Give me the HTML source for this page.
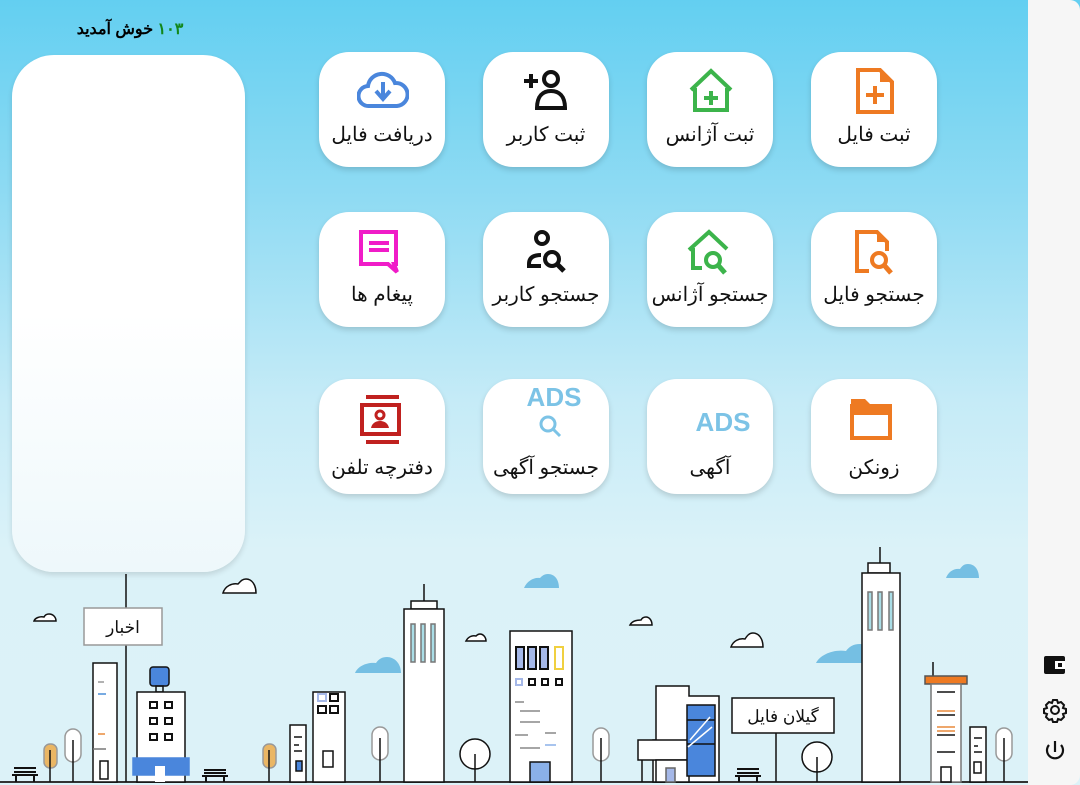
<!DOCTYPE html>
<html><head><meta charset="utf-8"><style>
body{margin:0;width:1080px;height:785px;overflow:hidden;font-family:"Liberation Sans","Noto Sans CJK SC",sans-serif;position:relative;
background:linear-gradient(180deg,#63cff1 0px,#90dbf3 200px,#c5ebf7 400px,#dbf2f8 550px,#dcf2f8 785px);}
.side{position:absolute;left:1028px;top:0;width:52px;height:785px;background:#f6f6f6;border-radius:0 10px 10px 0;}
.panel{position:absolute;left:12px;top:55px;width:233px;height:517px;border-radius:42px;background:linear-gradient(180deg,#fff 0%,#fff 50%,#eef8fb 100%);box-shadow:0 3px 6px rgba(0,0,0,.12);}
.welcome{position:absolute;left:60px;top:19px;width:140px;text-align:center;font-weight:bold;font-size:16px;direction:rtl;}
.card{position:absolute;width:126px;height:115px;background:#fff;border-radius:30px;box-shadow:0 3px 6px rgba(0,0,0,.15);}
.card svg{position:absolute;left:38px;top:16px;}
.card .t{position:absolute;left:0;right:0;top:70px;text-align:center;font-size:20px;direction:rtl;color:#111;}
</style></head><body>
<svg width="1080" height="785" style="position:absolute;left:0;top:0" fill="none" stroke="#111" stroke-width="1.5">
 <path d="M223 593h33c0-8-4-14-10-14-4 0-6 3-8 5-6-1-13 2-15 9z" fill="#fff"/>
 <path d="M34 621h22c0-4-3-7-7-7-2 0-4 1-5 3-4-1-9 1-10 4z" fill="#fff"/>
 <path d="M466 641h20c0-4-3-7-6-7-2 0-3 1-4 2-4-1-8 1-10 5z" fill="#fff"/>
 <path d="M630 625h22c0-5-3-8-6-8-2 0-4 1-5 3-4 0-9 1-11 5z" fill="#fff"/>
 <path d="M731 647h32c0-8-4-14-10-14-4 0-6 3-8 6-6-1-12 2-14 8z" fill="#fff"/>
 <path d="M355 673h46c0-10-7-16-14-16-6 0-9 3-11 6-9-1-18 3-21 10z" fill="#75bfe3" stroke="none"/>
 <path d="M524 588h35c0-8-4-14-11-14-4 0-6 2-8 4-6-1-13 3-16 10z" fill="#75bfe3" stroke="none"/>
 <path d="M816 663h62c0-11-8-19-18-19-7 0-11 3-14 7-13-2-26 4-30 12z" fill="#75bfe3" stroke="none"/>
 <path d="M946 578h33c0-8-4-14-11-14-4 0-6 2-8 5-6-1-12 3-14 9z" fill="#75bfe3" stroke="none"/>
 <line x1="0" y1="782" x2="1028" y2="782" stroke="#333" stroke-width="2"/>
 <line x1="126" y1="574" x2="126" y2="782"/>
 <rect x="84" y="608" width="78" height="37" fill="#fff" stroke="#999"/>
 <text x="123" y="633" font-size="17" fill="#111" stroke="none" text-anchor="middle" font-family="Liberation Sans,sans-serif">اخبار</text>
 <rect x="93" y="663" width="24" height="119" fill="#fff"/>
 <line x1="98" y1="682" x2="104" y2="682" stroke="#999"/><line x1="98" y1="694" x2="106" y2="694" stroke="#4a8fd8"/><line x1="98" y1="734" x2="105" y2="734" stroke="#e88a3c"/><line x1="93" y1="749" x2="106" y2="749" stroke="#777"/>
 <rect x="100" y="761" width="8" height="18"/>
 <rect x="44" y="744" width="13" height="24" rx="6" fill="#eab664" stroke="#999"/><line x1="50" y1="750" x2="50" y2="782"/>
 <rect x="65" y="729" width="16" height="33" rx="8" fill="#fff" stroke="#999"/><line x1="73" y1="740" x2="73" y2="782"/>
 <rect x="263" y="744" width="13" height="24" rx="6" fill="#eab664" stroke="#999"/><line x1="269" y1="750" x2="269" y2="782"/>
 <rect x="372" y="727" width="16" height="33" rx="8" fill="#fff" stroke="#999"/><line x1="380" y1="738" x2="380" y2="782"/>
 <circle cx="475" cy="754" r="15" fill="#fff"/><line x1="475" y1="754" x2="475" y2="782"/>
 <rect x="593" y="728" width="16" height="33" rx="8" fill="#fff" stroke="#999"/><line x1="601" y1="738" x2="601" y2="782"/>
 <circle cx="817" cy="757" r="15" fill="#fff"/><line x1="817" y1="757" x2="817" y2="782"/>
 <rect x="996" y="728" width="16" height="33" rx="8" fill="#fff" stroke="#999"/><line x1="1004" y1="738" x2="1004" y2="782"/>
 <g stroke-width="2"><line x1="14" y1="768" x2="36" y2="768"/><line x1="14" y1="772" x2="36" y2="772"/><line x1="12" y1="775" x2="38" y2="775"/><line x1="16" y1="775" x2="16" y2="782"/><line x1="34" y1="775" x2="34" y2="782"/></g>
 <g stroke-width="2"><line x1="204" y1="770" x2="226" y2="770"/><line x1="204" y1="773" x2="226" y2="773"/><line x1="202" y1="776" x2="228" y2="776"/><line x1="206" y1="776" x2="206" y2="782"/><line x1="224" y1="776" x2="224" y2="782"/></g>
 <g stroke-width="2"><line x1="737" y1="769" x2="759" y2="769"/><line x1="737" y1="773" x2="759" y2="773"/><line x1="735" y1="776" x2="761" y2="776"/><line x1="739" y1="776" x2="739" y2="782"/><line x1="757" y1="776" x2="757" y2="782"/></g>
 <rect x="150" y="667" width="19" height="19" rx="3" fill="#4a86dc"/><rect x="156" y="686" width="7" height="6"/>
 <rect x="137" y="692" width="48" height="90" fill="#fff"/>
 <g stroke-width="2"><rect x="150" y="702" width="7" height="6"/><rect x="165" y="702" width="7" height="6"/><rect x="150" y="718" width="7" height="6"/><rect x="165" y="718" width="7" height="6"/><rect x="150" y="734" width="7" height="6"/><rect x="165" y="734" width="7" height="6"/></g>
 <rect x="133" y="758" width="56" height="17" fill="#4a86dc" stroke="#4a86dc"/><rect x="155" y="766" width="10" height="16" fill="#fff" stroke="none"/>
 <rect x="290" y="725" width="16" height="57" fill="#fff"/><line x1="294" y1="737" x2="302" y2="737"/><line x1="294" y1="745" x2="299" y2="745"/><line x1="294" y1="751" x2="302" y2="751"/><rect x="296" y="761" width="6" height="10" fill="#4a86dc"/>
 <rect x="313" y="692" width="32" height="90" fill="#fff"/><rect x="318" y="694" width="8" height="7" stroke="#a5b8e8" stroke-width="2"/><rect x="330" y="694" width="8" height="7" stroke-width="2"/><rect x="318" y="706" width="8" height="7" stroke-width="2"/><rect x="330" y="706" width="8" height="7" stroke-width="2"/><rect x="323" y="751" width="10" height="16"/>
 <line x1="424" y1="584" x2="424" y2="602"/><rect x="411" y="601" width="26" height="8" fill="#fff"/>
 <rect x="404" y="609" width="40" height="173" fill="#fff"/>
 <rect x="411" y="624" width="4" height="38" fill="#a9dde6" stroke="#777"/><rect x="421" y="624" width="4" height="38" fill="#a9dde6" stroke="#777"/><rect x="431" y="624" width="4" height="38" fill="#a9dde6" stroke="#777"/>
 <rect x="510" y="631" width="62" height="151" fill="#fff"/>
 <rect x="516" y="647" width="8" height="22" fill="#a5b8e8" stroke-width="2"/><rect x="528" y="647" width="8" height="22" fill="#a5b8e8" stroke-width="2"/><rect x="540" y="647" width="8" height="22" fill="#a5b8e8" stroke-width="2"/><rect x="555" y="647" width="8" height="22" stroke="#f0d040" stroke-width="2"/>
 <rect x="516" y="679" width="6" height="6" stroke="#a5b8e8" stroke-width="2"/><rect x="529" y="679" width="6" height="6" stroke-width="2"/><rect x="542" y="679" width="6" height="6" stroke-width="2"/><rect x="556" y="679" width="6" height="6" stroke-width="2"/>
 <g stroke="#888"><line x1="515" y1="702" x2="524" y2="702"/><line x1="520" y1="711" x2="540" y2="711"/><line x1="520" y1="722" x2="540" y2="722"/><line x1="515" y1="735" x2="528" y2="735"/><line x1="545" y1="733" x2="556" y2="733"/><line x1="545" y1="745" x2="556" y2="745" stroke="#8ab0e8"/><line x1="520" y1="748" x2="540" y2="748"/></g>
 <rect x="530" y="762" width="20" height="20" fill="#8ab0e8"/>
 <path d="M653 782V740h3v-54h33v10h30v86z" fill="#fff"/>
 <rect x="638" y="740" width="50" height="20" fill="#fff"/><line x1="642" y1="760" x2="642" y2="782"/>
 <rect x="656" y="760" width="33" height="22" fill="#fff"/><rect x="666" y="768" width="9" height="14" fill="#a5b8e8" stroke="#666"/>
 <rect x="687" y="705" width="28" height="71" fill="#4a86dc"/><line x1="687" y1="720" x2="715" y2="720"/><line x1="687" y1="744" x2="715" y2="744"/><line x1="690" y1="740" x2="710" y2="717" stroke="#fff"/><line x1="688" y1="747" x2="712" y2="727" stroke="#fff"/>
 <line x1="776" y1="733" x2="776" y2="782"/>
 <rect x="732" y="698" width="102" height="35" fill="#fff"/>
 <text x="783" y="722" font-size="17" fill="#111" stroke="none" text-anchor="middle" font-family="Liberation Sans,sans-serif">گیلان فایل</text>
 <line x1="880" y1="547" x2="880" y2="563"/><rect x="868" y="563" width="22" height="10" fill="#fff"/>
 <rect x="862" y="573" width="38" height="209" fill="#fff"/>
 <rect x="868" y="592" width="4" height="38" fill="#a9dde6" stroke="#777"/><rect x="878" y="592" width="4" height="38" fill="#a9dde6" stroke="#777"/><rect x="889" y="592" width="4" height="38" fill="#a9dde6" stroke="#777"/>
 <line x1="933" y1="662" x2="933" y2="676"/><rect x="925" y="676" width="42" height="8" fill="#ee7a22" stroke="#555"/>
 <rect x="931" y="684" width="30" height="98" fill="#fff" stroke="#777"/>
 <line x1="937" y1="692" x2="955" y2="692"/><line x1="937" y1="711" x2="955" y2="711" stroke="#e88a3c"/><line x1="937" y1="715" x2="955" y2="715"/><line x1="937" y1="727" x2="955" y2="727" stroke="#e88a3c"/><line x1="937" y1="731" x2="955" y2="731" stroke="#e88a3c"/><line x1="937" y1="735" x2="955" y2="735"/><line x1="937" y1="752" x2="955" y2="752"/>
 <rect x="941" y="767" width="10" height="15"/>
 <rect x="970" y="727" width="16" height="55" fill="#fff"/><line x1="974" y1="738" x2="982" y2="738"/><line x1="974" y1="746" x2="978" y2="746"/><line x1="974" y1="752" x2="982" y2="752"/><rect x="974" y="762" width="7" height="11"/>
</svg>

<div class="welcome"><span style="color:#12871a">١٠٣</span> خوش آمدید</div>
<div class="panel"></div>
<div class="side">
 <svg width="52" height="785" style="position:absolute;left:0;top:0">
  <rect x="16" y="656" width="21" height="18" rx="2" fill="#111"/><rect x="27" y="661" width="10" height="8" fill="#fff"/><rect x="30" y="663" width="4" height="4" fill="#111"/>
  <g transform="translate(27,710)" fill="none" stroke="#111" stroke-width="2"><circle r="4"/><path d="M-2-10h4l1 3 3-1 3 3-1 3 3 1v4l-3 1 1 3-3 3-3-1-1 3h-4l-1-3-3 1-3-3 1-3-3-1v-4l3-1-1-3 3-3 3 1z"/></g>
  <g fill="none" stroke="#111" stroke-width="2.2"><path d="M21 745a8 8 0 1 0 12 0"/><line x1="27" y1="741" x2="27" y2="752"/></g>
 </svg>
</div>

<div class="card" style="left:319px;top:52px"><svg width="52" height="44" viewBox="0 0 52 44"><path d="M12 38a10 10 0 0 1-1-20 14 14 0 0 1 27-3 10 10 0 0 1 2 23z" fill="none" stroke="#4a86dc" stroke-width="4"/><path d="M26 14v15M19 23l7 8 7-8" fill="none" stroke="#4a86dc" stroke-width="4"/></svg><div class="t">دریافت فایل</div></div>
<div class="card" style="left:483px;top:52px"><svg width="52" height="44" viewBox="0 0 52 44"><circle cx="30" cy="11" r="7" fill="none" stroke="#111" stroke-width="4"/><path d="M16 40c0-12 6-17 14-17s14 5 14 17z" fill="none" stroke="#111" stroke-width="4"/><path d="M3 13h14M10 6v14" stroke="#111" stroke-width="4"/></svg><div class="t">ثبت کاربر</div></div>
<div class="card" style="left:647px;top:52px"><svg width="52" height="46" viewBox="0 0 52 46"><path d="M6 22L26 3l20 19M10 20v22h32V20" fill="none" stroke="#3cb44b" stroke-width="4"/><path d="M26 23v14M19 30h14" stroke="#3cb44b" stroke-width="4"/></svg><div class="t">ثبت آژانس</div></div>
<div class="card" style="left:811px;top:52px"><svg width="52" height="46" viewBox="0 0 52 46"><path d="M9 2h22l12 12v30H9z" fill="none" stroke="#ee7a22" stroke-width="4"/><path d="M31 2v12h12" fill="#ee7a22"/><path d="M26 18v18M17 27h18" stroke="#ee7a22" stroke-width="4"/></svg><div class="t">ثبت فایل</div></div>
<div class="card" style="left:319px;top:212px"><svg width="52" height="48" viewBox="0 0 52 48"><path d="M4 4h35v32h-2l3 8-9-8H4z" fill="none" stroke="#f01cc8" stroke-width="4"/><path d="M12 15h20M12 22h20" stroke="#f01cc8" stroke-width="4"/></svg><div class="t">پیغام ها</div></div>
<div class="card" style="left:483px;top:212px"><svg width="52" height="48" viewBox="0 0 52 48"><circle cx="21" cy="10" r="6" fill="none" stroke="#111" stroke-width="4"/><path d="M20 27c-8 0-12 3-12 9v2h12" fill="none" stroke="#111" stroke-width="4"/><circle cx="31" cy="31" r="7" fill="none" stroke="#111" stroke-width="4"/><path d="M36 36l7 7" stroke="#111" stroke-width="5"/></svg><div class="t">جستجو کاربر</div></div>
<div class="card" style="left:647px;top:212px"><svg width="52" height="48" viewBox="0 0 52 48"><path d="M4 22L24 4l18 17M8 20v20h9" fill="none" stroke="#3cb44b" stroke-width="4"/><circle cx="28" cy="32" r="7" fill="none" stroke="#3cb44b" stroke-width="4"/><path d="M33 37l7 8" stroke="#3cb44b" stroke-width="5"/></svg><div class="t">جستجو آژانس</div></div>
<div class="card" style="left:811px;top:212px"><svg width="52" height="48" viewBox="0 0 52 48"><path d="M20 43H8V4h20l10 10v9" fill="none" stroke="#ee7a22" stroke-width="4"/><path d="M28 4v10h10" fill="#ee7a22"/><circle cx="30" cy="32" r="7" fill="none" stroke="#ee7a22" stroke-width="4"/><path d="M35 37l7 8" stroke="#ee7a22" stroke-width="5"/></svg><div class="t">جستجو فایل</div></div>
<div class="card" style="left:319px;top:379px"><svg width="52" height="50" viewBox="0 0 52 50"><path d="M9 2h33M9 47h33" stroke="#c0211f" stroke-width="4"/><rect x="5" y="10" width="37" height="29" fill="none" stroke="#c0211f" stroke-width="4"/><circle cx="23" cy="20" r="4" fill="none" stroke="#c0211f" stroke-width="3"/><path d="M14 33c1-5 5-7 9-7s8 2 9 7z" fill="#c0211f"/></svg><div class="t" style="top:76px">دفترچه تلفن</div></div>
<div class="card" style="left:483px;top:379px"><div style="position:absolute;left:0;right:0;top:3px;text-align:center;font:bold 26px 'Liberation Sans',sans-serif;color:#7cc3e6;padding-left:16px">ADS</div><svg style="left:54px;top:34px" width="30" height="30" viewBox="0 0 30 30"><circle cx="11" cy="11" r="7" fill="none" stroke="#7cc3e6" stroke-width="3"/><path d="M16 16l7 7" stroke="#7cc3e6" stroke-width="3"/></svg><div class="t" style="top:76px">جستجو آگهی</div></div>
<div class="card" style="left:647px;top:379px"><div style="position:absolute;left:0;right:0;top:28px;text-align:center;font:bold 26px 'Liberation Sans',sans-serif;color:#7cc3e6;padding-left:26px">ADS</div><div class="t" style="top:76px">آگهی</div></div>
<div class="card" style="left:811px;top:379px"><svg width="52" height="48" viewBox="0 0 52 48"><path d="M2 20V4h14l5 5h19v11z" fill="#ee7a22"/><rect x="3" y="11" width="38" height="32" fill="none" stroke="#ee7a22" stroke-width="4"/></svg><div class="t" style="top:76px">زونکن</div></div>
</body></html>
